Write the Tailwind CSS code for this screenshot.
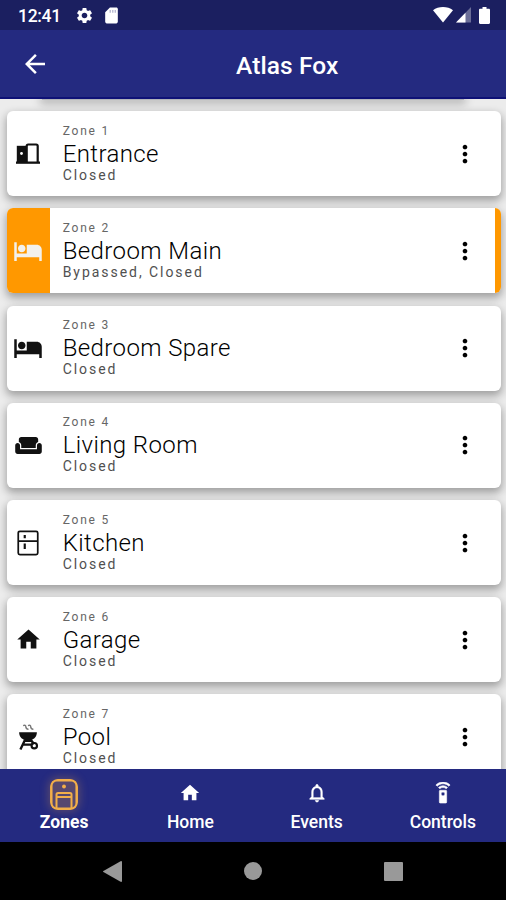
<!DOCTYPE html>
<html lang="en">
<head>
    <meta charset="UTF-8">
    <meta name="viewport" content="width=device-width, initial-scale=1.0">
    <title>Atlas Fox</title>
    <script src="https://cdn.jsdelivr.net/npm/@tailwindcss/browser@4"></script>
</head>
<body class="h-[900px] w-[506px] flex flex-col overflow-hidden bg-[#ececec] font-['Roboto',sans-serif]">

    <!-- Status bar -->
    <div class="h-[30px] shrink-0 flex items-center bg-[#1b1f60] pl-[18px] pr-[16px] text-white">
        <span class="text-[17.5px] font-medium leading-none mt-[3px] tracking-[-0.300px]">12:41</span>
        <svg class="w-[19px] h-[19px] ml-[14px]" viewBox="0 0 24 24" fill="currentColor"><path d="M19.14 12.94c.04-.3.06-.61.06-.94 0-.32-.02-.64-.07-.94l2.03-1.58a.49.49 0 0 0 .12-.61l-1.92-3.32a.488.488 0 0 0-.59-.22l-2.39.96c-.5-.38-1.03-.7-1.62-.94l-.36-2.54a.484.484 0 0 0-.48-.41h-3.84c-.24 0-.43.17-.47.41l-.36 2.54c-.59.24-1.13.57-1.62.94l-2.39-.96c-.22-.08-.47 0-.59.22L2.74 8.87c-.12.21-.08.47.12.61l2.03 1.58c-.05.3-.09.63-.09.94s.02.64.07.94l-2.03 1.58a.49.49 0 0 0-.12.61l1.92 3.32c.12.22.37.29.59.22l2.39-.96c.5.38 1.03.7 1.62.94l.36 2.54c.05.24.24.41.48.41h3.84c.24 0 .44-.17.47-.41l.36-2.54c.59-.24 1.13-.56 1.62-.94l2.39.96c.22.08.47 0 .59-.22l1.92-3.32c.12-.22.07-.47-.12-.61l-2.01-1.58zM12 15.6c-1.980 0-3.600-1.620-3.600-3.600s1.620-3.600 3.600-3.600 3.600 1.620 3.600 3.600-1.620 3.600-3.600 3.600z"/></svg>
        <svg class="w-[19px] h-[19px] ml-[8px]" viewBox="0 0 24 24" fill="currentColor"><path d="M18 2h-8L4.02 8 4 20c0 1.1.9 2 2 2h12c1.1 0 2-.9 2-2V4c0-1.1-.9-2-2-2z"/><path fill="#b9bad2" d="M9.5 5h1.800v3.500H9.500zM12.700 5h1.800v3.500h-1.800zM15.900 5h1.800v3.500h-1.800z"/></svg>
        <svg class="w-[20px] h-[16px] ml-auto" viewBox="0 0 20 16" fill="currentColor"><path d="M0 3.200C2.800 1 6.200 0 10 0s7.200 1 10 3.200L10 15.500z"/></svg>
        <svg class="w-[15px] h-[16px] ml-[3px]" viewBox="0 0 15 16" fill="currentColor"><path fill-opacity=".35" d="M15 0v15.500H0z"/><path d="M9.500 5.700v9.800H0z"/></svg>
        <svg class="w-[11px] h-[17px] ml-[8px]" viewBox="0 0 11 17" fill="currentColor"><path d="M3.500 0h4v1.700h2.300c.7 0 1.200.5 1.200 1.200v12.900c0 .7-.5 1.200-1.200 1.200H1.200C.5 17 0 16.500 0 15.800V2.900c0-.7.500-1.200 1.200-1.200h2.300z"/></svg>
    </div>

    <!-- App bar -->
    <header class="h-[69px] shrink-0 flex items-center relative z-10 bg-[#242a80] border-b-2 border-[#0e1176] text-white">
        <svg class="w-[30px] h-[30px] ml-[20px] mt-px" viewBox="0 0 24 24" fill="currentColor"><path d="M20 11H7.830l5.590-5.590L12 4l-8 8 8 8 1.410-1.410L7.830 13H20v-2z"/></svg>
        <h1 class="ml-[186px] mt-[5px] text-[24.5px] font-medium leading-none tracking-[0.100px]">Atlas Fox</h1>
    </header>

    <!-- Zone list -->
    <main class="flex-1 min-h-0 overflow-hidden">
        <div class="h-px mx-[42px] bg-[#b0b3b8] shadow-[0_1px_8px_2px_rgba(0,0,0,0.35)]"></div>
        <div id="zoneList" class="mt-[11.300px] ml-[6.700px] w-[494px] flex flex-col gap-[12.200px]"></div>
    </main>

    <!-- Bottom tabs -->
    <nav class="h-[73px] shrink-0 relative z-10 grid grid-cols-4 bg-[#242a80] pl-px text-white text-[17.500px] leading-[20px] text-center">
        <div class="flex flex-col items-center">
            <div class="h-[43px] pt-[10px]">
                <svg class="w-[28px] h-[31px] rounded-lg bg-[#f0a33c]/25 shadow-[0_0_9px_2px_rgba(240,163,60,0.25)]" viewBox="0 0 28 31" fill="none" stroke="#f2ae49" stroke-width="2.500"><rect x="1.300" y="1.300" width="25.400" height="28.400" rx="5.500"/><path d="M6.500 29V15.500a1.500 1.500 0 0 1 1.500-1.500h12a1.500 1.500 0 0 1 1.500 1.500V29M6.500 18h15" stroke-width="2"/><circle cx="14" cy="7.500" r="1.900" fill="#f2ae49" stroke="none"/></svg>
            </div>
            <span class="font-bold">Zones</span>
        </div>
        <div class="flex flex-col items-center">
            <div class="h-[43px] pt-[13px]">
                <svg class="w-[22px] h-[22px]" viewBox="0 0 24 24" fill="currentColor"><path d="M10 20v-6h4v6h5v-8h3L12 3 2 12h3v8z"/></svg>
            </div>
            <span class="font-medium">Home</span>
        </div>
        <div class="flex flex-col items-center">
            <div class="h-[43px] pt-[13px]">
                <svg class="w-[22px] h-[22px]" viewBox="0 0 24 24" fill="currentColor" stroke="currentColor" stroke-width=".3"><path d="M12 22c1.100 0 2-.9 2-2h-4c0 1.100.9 2 2 2zm6-6v-5c0-3.070-1.630-5.640-4.500-6.320V4c0-.83-.67-1.500-1.500-1.500s-1.500.67-1.500 1.500v.68C7.640 5.360 6 7.920 6 11v5l-2 2v1h16v-1l-2-2zm-2 1H8v-6c0-2.480 1.510-4.500 4-4.500s4 2.020 4 4.500v6z"/></svg>
            </div>
            <span class="font-medium">Events</span>
        </div>
        <div class="flex flex-col items-center">
            <div class="h-[43px] pt-[13px]">
                <svg class="w-[22px] h-[22px]" viewBox="0 0 24 24" fill="currentColor" stroke="currentColor" stroke-width=".6"><path d="M15 9H9c-.55 0-1 .45-1 1v12c0 .55.450 1 1 1h6c.55 0 1-.45 1-1V10c0-.55-.45-1-1-1zm-3 6c-1.100 0-2-.9-2-2s.9-2 2-2 2 .9 2 2-.9 2-2 2zM7.050 6.050l1.410 1.410C9.370 6.560 10.620 6 12 6s2.630.56 3.540 1.460l1.410-1.410C15.680 4.780 13.930 4 12 4s-3.680.78-4.950 2.050zM12 0C8.960 0 6.210 1.230 4.220 3.220l1.410 1.410C7.260 3.010 9.510 2 12 2s4.740 1.010 6.360 2.640l1.410-1.410C17.790 1.230 15.040 0 12 0z"/></svg>
            </div>
            <span class="font-medium">Controls</span>
        </div>
    </nav>

    <!-- System navigation -->
    <div class="h-[58px] shrink-0 relative z-10 flex items-center bg-black text-[#999]">
        <svg class="w-[19px] h-[21px] ml-[103px]" viewBox="0 0 19 21" fill="currentColor"><path d="M17.600.2c.8-.4 1.400 0 1.400.8v19c0 .8-.6 1.200-1.400.8L.4 11.100c-.5-.3-.5-.9 0-1.200z"/></svg>
        <div class="w-[18px] h-[18px] ml-[122px] rounded-full bg-[#999]"></div>
        <div class="w-[19px] h-[19px] ml-[122px] rounded-[1px] bg-[#999]"></div>
    </div>

    <script>
        const icons = {
            door: '<path d="M.8 3.800h10V21H.8z"/><path d="M10.700 20V4a1.500 1.500 0 0 1 1.500-1.500h8A1.500 1.500 0 0 1 21.700 4v16" fill="none" stroke="currentColor" stroke-width="2.200"/><path d="M0 19.500h24v2.300H0z"/><circle cx="5.500" cy="11.500" r="1.400" fill="#fff"/>',
            bed: '<path d="M7 13c1.660 0 3-1.340 3-3S8.660 7 7 7s-3 1.340-3 3 1.340 3 3 3zm12-6h-8v7H3V5H1v15h2v-3h18v3h2v-9c0-2.210-1.790-4-4-4z"/>',
            sofa: '<path d="M21 10c-1.100 0-2 .9-2 2v3H5v-3c0-1.100-.9-2-2-2s-2 .9-2 2v5c0 1.100.9 2 2 2h18c1.100 0 2-.9 2-2v-5c0-1.100-.9-2-2-2zm-3-5H6c-1.100 0-2 .9-2 2v2.150c1.160.41 2 1.510 2 2.820V14h12v-2.030c0-1.300.84-2.400 2-2.820V7c0-1.100-.9-2-2-2z"/>',
            fridge: '<path d="M4.500 1.200h15q1.500 0 1.500 1.500v18.600q0 1.500-1.500 1.500h-15Q3 22.800 3 21.300V2.700q0-1.500 1.500-1.500zM3 10.200h18" fill="none" stroke="currentColor" stroke-width="1.600"/><path d="M8 4.700h2v3H8zM8 12.500h2v5H8z"/>',
            home: '<path d="M10 20v-6h4v6h5v-8h3L12 3 2 12h3v8z"/>',
            grill: '<path d="M3.800 7.500h16.400c0 4-2.600 6.500-5.500 7.200l1.300 2H8l1.300-2C6.400 14 3.800 11.500 3.800 7.500z"/><path d="M9.300 14.500L5 23.500M14.500 14.500l3 4M7.500 19h8" fill="none" stroke="currentColor" stroke-width="2.200"/><circle cx="17.800" cy="20" r="2.500" fill="none" stroke="currentColor" stroke-width="2"/><path d="M7.500 1.500q2.500-1 2.500 1t2.500 2.500M12 1.500q2.500-1 2.500 1T17 5" fill="none" stroke="#777" stroke-width="1.300"/>'
        };

        const zones = [
            { name: 'Entrance', status: 'Closed', icon: 'door' },
            { name: 'Bedroom Main', status: 'Bypassed, Closed', icon: 'bed', bypassed: true },
            { name: 'Bedroom Spare', status: 'Closed', icon: 'bed' },
            { name: 'Living Room', status: 'Closed', icon: 'sofa' },
            { name: 'Kitchen', status: 'Closed', icon: 'fridge' },
            { name: 'Garage', status: 'Closed', icon: 'home' },
            { name: 'Pool', status: 'Closed', icon: 'grill' }
        ];

        // wide icons get a larger box than the upright ones
        const iconSize = {
            door: 'w-[24px] h-[24px]',
            bed: 'w-[30px] h-[30px]',
            sofa: 'w-[29px] h-[29px]',
            fridge: 'w-[26px] h-[26px]',
            home: 'w-[27px] h-[27px]',
            grill: 'w-[26px] h-[26px]'
        };

        document.getElementById('zoneList').innerHTML = zones.map((zone, i) => `
            <div class="h-[85px] shrink-0 flex rounded-[6px] bg-white shadow-[0_4px_8px_1px_rgba(0,0,0,0.32)]">
                <div class="w-[43px] flex items-center justify-center rounded-l-[6px] ${zone.bypassed ? 'bg-[#ff9800] text-[#f3f1ec]' : 'text-[#111]'}">
                    <svg class="${iconSize[zone.icon]} shrink-0" viewBox="0 0 24 24" fill="currentColor">${icons[zone.icon]}</svg>
                </div>
                <div class="flex-1 pl-[13px] pt-[11.500px] whitespace-nowrap">
                    <p class="text-[12px] leading-[17px] tracking-[1.800px] text-[#666]">Zone ${i + 1}</p>
                    <p class="text-[24px] leading-[28px] tracking-[0.400px] font-light text-black">${zone.name}</p>
                    <p class="text-[14px] leading-[15px] tracking-[1.950px] text-[#505050]">${zone.status}</p>
                </div>
                <svg class="w-[28px] h-[28px] self-center mr-[16px]" viewBox="0 0 24 24"><path d="M12 8c1.100 0 2-.9 2-2s-.9-2-2-2-2 .9-2 2 .9 2 2 2zm0 2c-1.100 0-2 .9-2 2s.9 2 2 2 2-.9 2-2-.9-2-2-2zm0 6c-1.100 0-2 .9-2 2s.9 2 2 2 2-.9 2-2-.9-2-2-2z"/></svg>
                <div class="w-[6px] rounded-r-[6px] ${zone.bypassed ? 'bg-[#ff9800]' : ''}"></div>
            </div>
        `).join('');
    </script>
</body>
</html>
